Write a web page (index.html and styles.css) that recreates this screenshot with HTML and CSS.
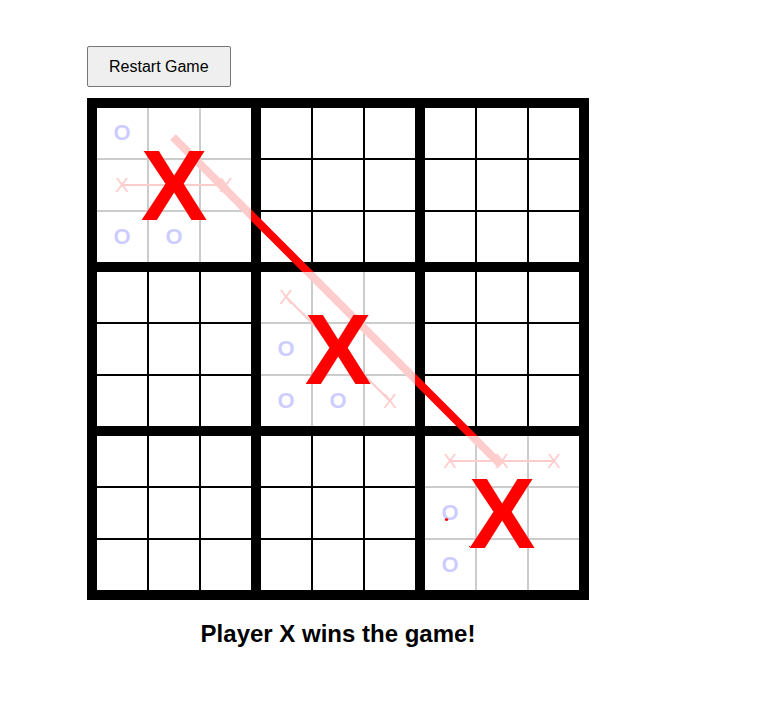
FILE: index.html
```html
<!DOCTYPE html>
<html lang="en">
<head>
<meta charset="utf-8">
<title>Ultimate Tic-Tac-Toe</title>
<link rel="stylesheet" href="styles.css">
</head>
<body>
<div class="app">
  <button class="restart" type="button">Restart Game</button>
  <div class="board">
    <div class="mini">
      <div class="cell o">O</div><div class="cell"></div><div class="cell"></div>
      <div class="cell x">X</div><div class="cell x">X</div><div class="cell x">X</div>
      <div class="cell o">O</div><div class="cell o">O</div><div class="cell"></div>
      <div class="veil"><span class="big-x">X</span></div>
    </div>
    <div class="mini">
      <div class="cell"></div><div class="cell"></div><div class="cell"></div>
      <div class="cell"></div><div class="cell"></div><div class="cell"></div>
      <div class="cell"></div><div class="cell"></div><div class="cell"></div>
    </div>
    <div class="mini">
      <div class="cell"></div><div class="cell"></div><div class="cell"></div>
      <div class="cell"></div><div class="cell"></div><div class="cell"></div>
      <div class="cell"></div><div class="cell"></div><div class="cell"></div>
    </div>
    <div class="mini">
      <div class="cell"></div><div class="cell"></div><div class="cell"></div>
      <div class="cell"></div><div class="cell"></div><div class="cell"></div>
      <div class="cell"></div><div class="cell"></div><div class="cell"></div>
    </div>
    <div class="mini">
      <div class="cell x">X</div><div class="cell"></div><div class="cell"></div>
      <div class="cell o">O</div><div class="cell x">X</div><div class="cell"></div>
      <div class="cell o">O</div><div class="cell o">O</div><div class="cell x">X</div>
      <div class="veil"><span class="big-x">X</span></div>
    </div>
    <div class="mini">
      <div class="cell"></div><div class="cell"></div><div class="cell"></div>
      <div class="cell"></div><div class="cell"></div><div class="cell"></div>
      <div class="cell"></div><div class="cell"></div><div class="cell"></div>
    </div>
    <div class="mini">
      <div class="cell"></div><div class="cell"></div><div class="cell"></div>
      <div class="cell"></div><div class="cell"></div><div class="cell"></div>
      <div class="cell"></div><div class="cell"></div><div class="cell"></div>
    </div>
    <div class="mini">
      <div class="cell"></div><div class="cell"></div><div class="cell"></div>
      <div class="cell"></div><div class="cell"></div><div class="cell"></div>
      <div class="cell"></div><div class="cell"></div><div class="cell"></div>
    </div>
    <div class="mini">
      <div class="cell x">X</div><div class="cell x">X</div><div class="cell x">X</div>
      <div class="cell o">O</div><div class="cell"></div><div class="cell"></div>
      <div class="cell o">O</div><div class="cell"></div><div class="cell"></div>
      <div class="veil"><span class="big-x">X</span></div>
    </div>
    <svg class="lines" width="502" height="502" viewBox="0 0 502 502" aria-hidden="true">
      <line x1="35" y1="87" x2="139" y2="87" class="thin"/>
      <line x1="199" y1="199" x2="303" y2="303" class="thin"/>
      <line x1="363" y1="363" x2="467" y2="363" class="thin"/>
      <line x1="86" y1="39" x2="414" y2="367" class="win"/>
    </svg>
    <svg class="dots" width="502" height="502" viewBox="0 0 502 502" aria-hidden="true">
      <circle cx="359.5" cy="421.5" r="1.6" fill="#ff0000"/>
      <rect x="382" y="448" width="1" height="1" fill="#ff0000"/>
    </svg>
  </div>
  <h2 class="status">Player X wins the game!</h2>
</div>
</body>
</html>
```

FILE: styles.css
```css
body {
  margin: 0;
  background: #fff;
  font-family: "Liberation Sans", Arial, sans-serif;
}

.app {
  padding: 46px 0 0 87px;
}

.restart {
  display: block;
  font-family: "Liberation Sans", Arial, sans-serif;
  font-size: 16px;
  line-height: 19px;
  padding: 10px 21px;
  color: #000;
  background: #efefef;
  border: 1px solid #767676;
  border-radius: 2px;
}

.board {
  position: relative;
  display: grid;
  grid-template-columns: repeat(3, 154px);
  grid-auto-rows: 154px;
  gap: 10px;
  padding: 10px;
  width: fit-content;
  margin-top: 11px;
  background: #000;
}

.mini {
  position: relative;
  display: grid;
  grid-template-columns: repeat(3, 50px);
  grid-auto-rows: 50px;
  gap: 2px;
  background: #000;
}

.cell {
  display: flex;
  align-items: center;
  justify-content: center;
  background: #fff;
  font-family: "Liberation Sans", Arial, sans-serif;
  font-size: 21px;
}

.cell.x { color: #ff0000; }
.cell.o { color: #0000ff; font-weight: bold; font-size: 22px; }

.veil {
  position: absolute;
  inset: 0;
  z-index: 2;
  display: flex;
  align-items: center;
  justify-content: center;
  background: rgba(255, 255, 255, 0.8);
}

.big-x {
  font-family: "Liberation Sans", Arial, sans-serif;
  font-weight: bold;
  font-size: 100px;
  color: #ff0000;
}

.lines,
.dots {
  position: absolute;
  left: 0;
  top: 0;
  pointer-events: none;
}

.lines { z-index: 1; }
.dots { z-index: 3; }

.thin {
  stroke: #ff0000;
  stroke-width: 2;
}

.win {
  stroke: #ff0000;
  stroke-width: 8;
}

.status {
  width: 502px;
  margin: 20px 0;
  text-align: center;
  font-size: 24px;
  font-weight: bold;
  color: #000;
}
```
